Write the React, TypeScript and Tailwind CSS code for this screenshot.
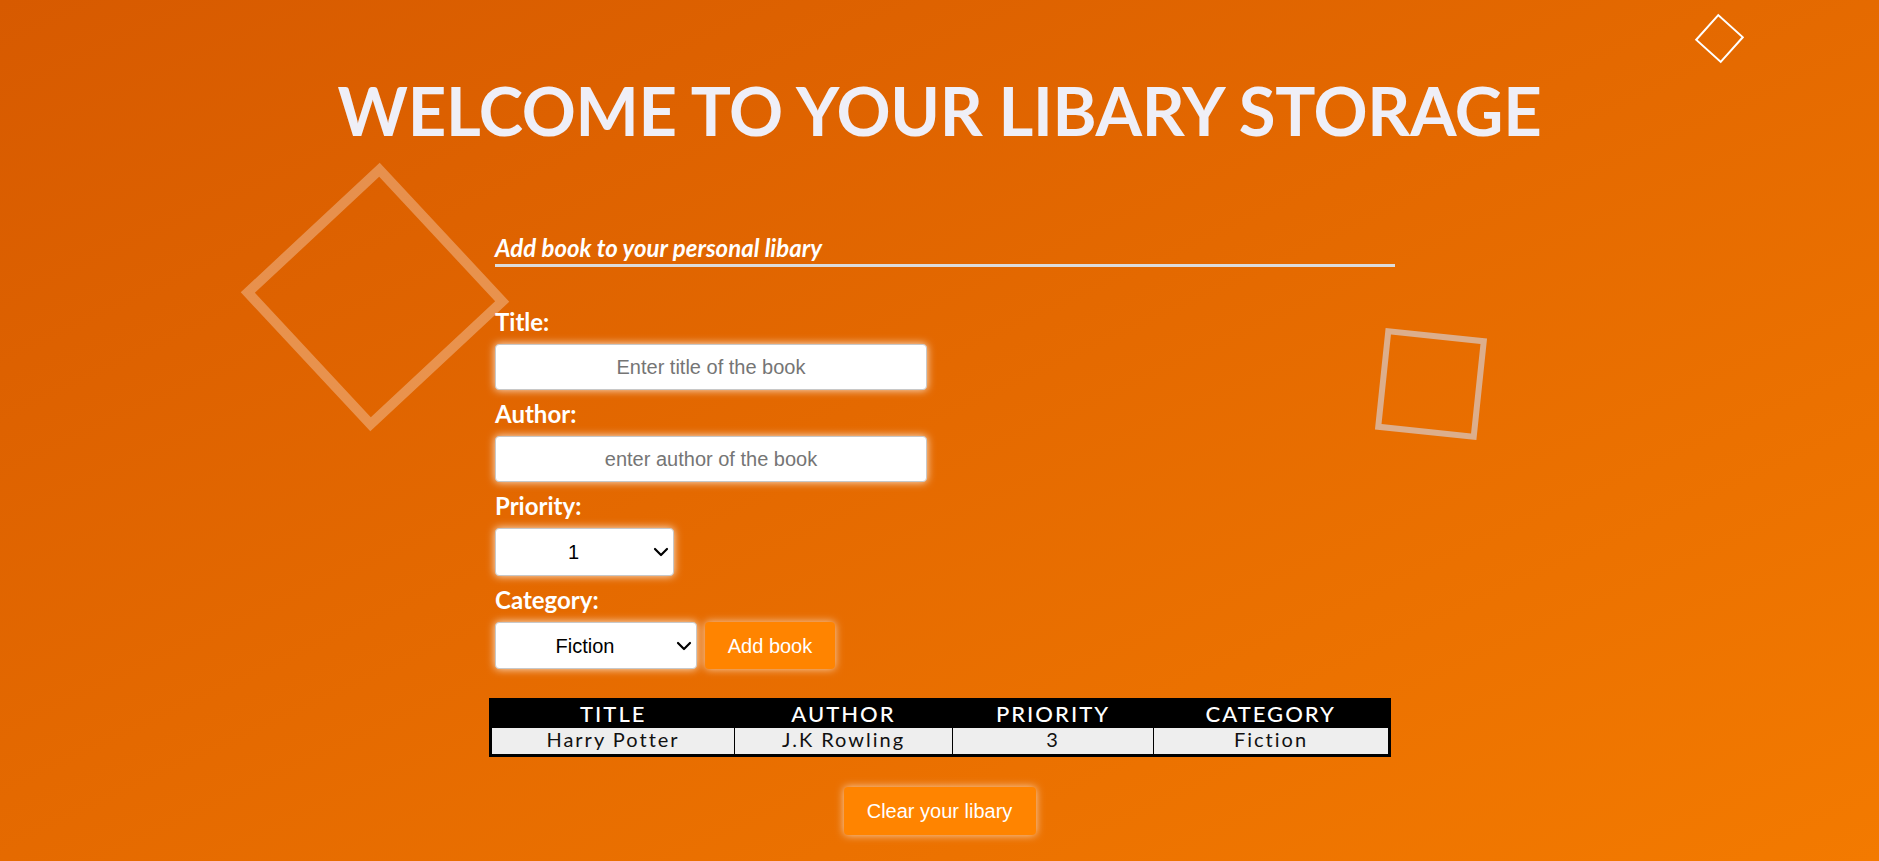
import { ChevronDown } from "lucide-react";

interface Book {
  title: string;
  author: string;
  priority: number;
  category: string;
}

const books: Book[] = [{ title: "Harry Potter", author: "J.K Rowling", priority: 3, category: "Fiction" }];

function Field({ label, children }: { label: string; children: React.ReactNode }) {
  return (
    <div className="mb-[6px]">
      <label className="block pt-[3px] text-[24px] leading-[30px] font-bold text-white mb-[7px]">{label}</label>
      {children}
    </div>
  );
}

function Select({ options, width }: { options: string[]; width: string }) {
  return (
    <div className={`relative ${width}`}>
      <select className="w-full h-full appearance-none rounded-[4px] border border-[#c8c8c8] bg-white pr-[22px] text-[20px] text-black font-['Liberation_Sans',sans-serif] [text-align-last:center] shadow-[0_0_8px_rgba(255,255,255,0.85)] outline-none">
        {options.map((o) => (
          <option key={o}>{o}</option>
        ))}
      </select>
      <ChevronDown className="pointer-events-none absolute right-[1px] top-1/2 -translate-y-1/2 w-[24px] h-[24px] text-black" strokeWidth={2.2} />
    </div>
  );
}

export default function App() {
  const inputCls =
    "w-[432px] h-[46px] rounded-[4px] border border-[#c8c8c8] bg-white text-center text-[20px] text-black font-['Liberation_Sans',sans-serif] placeholder:text-[#757575] shadow-[0_0_8px_rgba(255,255,255,0.85)] outline-none";

  return (
    <div className="relative min-h-screen w-full overflow-hidden bg-linear-to-br from-[#d75a00] to-[#f37a00] font-['Lato',sans-serif] pb-[26px]">
      {/* floating shapes */}
      <div className="absolute left-[280px] top-[202px] w-[190px] h-[190px] border-[10px] border-white/30 rotate-[47deg]" />
      <div className="absolute left-[1380px] top-[333px] w-[102px] h-[102px] border-[6px] border-[#dcae8c] rotate-[6deg]" />
      <div className="absolute left-[1702px] top-[21px] w-[35px] h-[35px] border-2 border-white rotate-[42deg]" />

      {/* Header */}
      <h1 className="pt-[77px] text-center text-[67px] leading-[67px] font-bold tracking-[-0.3px] text-[#efeff7]">
        WELCOME TO YOUR LIBARY STORAGE
      </h1>

      {/* Form */}
      <div className="relative ml-[495px] w-[900px] mt-[90px]">
        <h2 className="text-[24px] leading-[28px] font-bold italic text-white pb-[2px] border-b-[3px] border-[#dcdcdc]">
          Add book to your personal libary
        </h2>

        <div className="mt-[37px]">
          <Field label="Title:">
            <input className={inputCls} placeholder="Enter title of the book" />
          </Field>
          <Field label="Author:">
            <input className={inputCls} placeholder="enter author of the book" />
          </Field>
          <Field label="Priority:">
            <div className="h-[48px] flex">
              <Select options={["1", "2", "3", "4", "5"]} width="w-[179px]" />
            </div>
          </Field>
          <Field label="Category:">
            <div className="h-[47px] flex gap-[8px]">
              <Select options={["Fiction", "Non-fiction"]} width="w-[202px]" />
              <button className="w-[130px] h-[47px] rounded-[4px] bg-[#ff8400] text-white text-[20px] font-['Liberation_Sans',sans-serif] shadow-[0_0_8px_rgba(255,255,255,0.7)]">
                Add book
              </button>
            </div>
          </Field>
        </div>
      </div>

      {/* Table */}
      <table className="ml-[489px] mt-[29px] w-[899px] table-fixed border-collapse border-[3px] border-black text-center">
        <colgroup>
          <col className="w-[244px]" />
          <col className="w-[218px]" />
          <col className="w-[201px]" />
          <col className="w-[236px]" />
        </colgroup>
        <thead>
          <tr className="bg-black text-white">
            {["TITLE", "AUTHOR", "PRIORITY", "CATEGORY"].map((h) => (
              <th key={h} className="h-[26px] p-0 text-[22px] leading-[26px] font-medium tracking-[2px]">
                {h}
              </th>
            ))}
          </tr>
        </thead>
        <tbody>
          {books.map((b) => (
            <tr key={b.title} className="bg-[#eeeeee] text-[#111]">
              {[b.title, b.author, String(b.priority), b.category].map((v, i) => (
                <td key={i} className="h-[26px] pt-0 pb-[3px] border border-black text-[20px] leading-[23px] tracking-[2px]">
                  {v}
                </td>
              ))}
            </tr>
          ))}
        </tbody>
      </table>

      <div className="mt-[30px] flex justify-center">
        <button className="w-[192px] h-[48px] rounded-[4px] bg-[#ff8400] text-white text-[20px] font-['Liberation_Sans',sans-serif] shadow-[0_0_8px_rgba(255,255,255,0.7)]">
          Clear your libary
        </button>
      </div>
    </div>
  );
}
